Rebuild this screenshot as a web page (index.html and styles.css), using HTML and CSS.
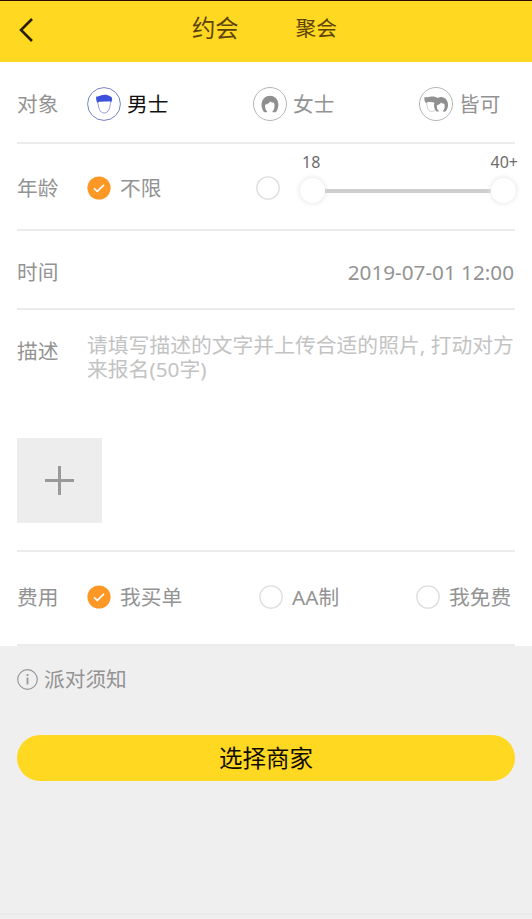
FILE: index.html
```html
<!DOCTYPE html>
<html lang="zh-CN">
<head>
<meta charset="utf-8">
<title>约会</title>
<link rel="stylesheet" href="styles.css">
</head>
<body>
<header class="header">
  <svg class="back" width="16" height="26" viewBox="0 0 16 26"><path d="M14 2 3 13l11 11" fill="none" stroke="#2a2005" stroke-width="2.600"/></svg>
  <span class="tab tab-active">约会</span>
  <span class="tab">聚会</span>
</header>
<main class="form">
  <section class="row row-target">
    <span class="label">对象</span>
    <div class="person selected">
      <svg width="34" height="34" viewBox="0 0 34 34"><circle cx="17" cy="17" r="16.400" fill="#fff" stroke="#7a80c4"/><path d="M11 14c0 7 2 12 6.200 12s6.300-5 6.300-12" fill="#fff" stroke="#939be0" stroke-width="1"/><path d="M9.200 9.500c1.500.3 3.500-.5 5-1.200 3-1 7-.8 8.700 1 2 .4 2.400 2 2.200 3.500l-.9 2.700-1-1.300c-4 .6-8 .2-11.700.5l-1 1.300c-1-1.200-1.700-4.600-1.300-6.500z" fill="#3d50dc"/></svg>
      <span>男士</span>
    </div>
    <div class="person female">
      <svg width="34" height="34" viewBox="0 0 34 34"><circle cx="17" cy="17" r="16.500" fill="#fff" stroke="#b5b5b5"/><path d="M11.200 25C6.500 20 8 9 17 8.800c9 .2 10.500 11.200 5.900 16.200-1.300.4-2.600.3-3.700-.1 2.300-2 3-5.600 1.800-9.100-1.400.1-2.700-.3-3.700-1.200-1 1.600-2.800 2.700-5.200 3.100-.4 3 .5 5.400 2.400 7.200-1 .4-2.200.4-3.300.1z" fill="#8f8f8f"/></svg>
      <span>女士</span>
    </div>
    <div class="person both">
      <svg width="34" height="34" viewBox="0 0 34 34"><circle cx="17" cy="17" r="16.500" fill="#fff" stroke="#b5b5b5"/><path d="M7.700 14c0 6 1.300 10.500 4.800 10.500s4.500-3 4.500-7" fill="#fff" stroke="#ccc"/><path d="M5.300 10.300c3 .3 5-.7 7-.8 2.800-.1 5.500.6 6.700 1.800l-3 4.500c-3-.9-5.200-.7-8-.6l-.8 1c-1.300-1-2.200-3.500-1.900-5.900z" fill="#929292"/><path d="M17.200 24.300c-4-4.300-2.400-14 4.900-14.200 7.500.2 8.700 9.900 4.700 14.200-1.100.5-2.200.4-3.200 0 2.100-1.800 2.600-4.600 1.700-7.500-1.300.1-2.300-.3-3.200-1.200-.9 1.500-2.300 2.300-4.200 2.600-.3 2.500.4 4.600 2.100 6.100-.9.300-1.900.3-2.800 0z" fill="#8f8f8f"/></svg>
      <span>皆可</span>
    </div>
  </section>
  <section class="row row-age">
    <span class="label">年龄</span>
    <div class="option">
      <svg class="radio" viewBox="0 0 24 24"><circle cx="12" cy="12" r="11.600" fill="#fd9827"/><path d="m7 12.300 3.300 3 6.700-6.500" fill="none" stroke="#fff" stroke-width="1.700"/></svg>
      <span>不限</span>
    </div>
    <svg class="radio age-radio" viewBox="0 0 24 24"><circle cx="12" cy="12" r="11.200" fill="#fff" stroke="#dedede" stroke-width="1.300"/></svg>
    <div class="range">
      <div class="range-labels"><span>18</span><span>40+</span></div>
      <div class="slider"><i class="knob"></i><i class="track"></i><i class="knob"></i></div>
    </div>
  </section>
  <section class="row row-time">
    <span class="label">时间</span>
    <span class="date">2019-07-01 12:00</span>
  </section>
  <section class="row row-desc">
    <div class="desc">
      <span class="label">描述</span>
      <p class="placeholder">请填写描述的文字并上传合适的照片, 打动对方<br>来报名(50字)</p>
    </div>
    <div class="upload">
      <svg width="29" height="29" viewBox="0 0 29 29"><path d="M14.500 0v29M0 14.500h29" stroke="#999" stroke-width="3"/></svg>
    </div>
  </section>
  <section class="row row-cost">
    <span class="label">费用</span>
    <div class="option">
      <svg class="radio" viewBox="0 0 24 24"><circle cx="12" cy="12" r="11.600" fill="#fd9827"/><path d="m7 12.300 3.300 3 6.700-6.500" fill="none" stroke="#fff" stroke-width="1.700"/></svg>
      <span>我买单</span>
    </div>
    <div class="option split">
      <svg class="radio" viewBox="0 0 24 24"><circle cx="12" cy="12" r="11.200" fill="#fff" stroke="#dedede" stroke-width="1.300"/></svg>
      <span>AA制</span>
    </div>
    <div class="option free">
      <svg class="radio" viewBox="0 0 24 24"><circle cx="12" cy="12" r="11.200" fill="#fff" stroke="#dedede" stroke-width="1.300"/></svg>
      <span>我免费</span>
    </div>
  </section>
</main>
<div class="notice">
  <svg width="21" height="21" viewBox="0 0 21 21"><circle cx="10.500" cy="10.500" r="9.800" fill="none" stroke="#999" stroke-width="1.200"/><path d="M10.500 8.500v7M10.500 5v2" stroke="#999" stroke-width="1.800"/></svg>
  <span>派对须知</span>
</div>
<button class="submit">选择商家</button>
<div class="bottom-line"></div>
</body>
</html>
```
FILE: styles.css
```css
* { box-sizing: border-box; }
body {
  margin: 0;
  height: 919px;
  display: flex;
  flex-direction: column;
  background: #efefef;
  color: #939393;
  font: 20.7px/24px "Noto Sans", "Noto Sans CJK SC", sans-serif;
  overflow: hidden;
}
svg { display: block; flex: none; }
span { white-space: nowrap; }
.header {
  height: 62px;
  flex: none;
  display: flex;
  align-items: center;
  padding: 0 0 7px 18px;
  background: #ffd821;
  border-top: 1px solid #2b0d05;
  color: #5c430b;
}
.back { margin-top: 4px; }
.tab { margin-left: 57px; }
.tab-active { margin-left: 158px; font-size: 23.3px; }
.form { flex: none; background: #fff; padding: 0 17px; }
.row { display: flex; align-items: center; border-bottom: 2px solid #ebebeb; }
.label { width: 70px; flex: none; }
.row-target { height: 82px; padding-top: 4px; }
.person { display: flex; align-items: center; gap: 6px; width: 166px; flex: none; }
.both { width: auto; }
.selected { color: #111; }
.row-age { height: 87px; padding-top: 2px; }
.option { display: flex; align-items: center; gap: 9px; }
.radio { width: 24px; height: 24px; }
.row-age .option { width: 169px; flex: none; }
.range { width: 216px; margin: -20px -3px 0 20px; flex: none; }
.range-labels { display: flex; justify-content: space-between; margin-right: -2px; padding-left: 2px; font-size: 16px; line-height: 20px; color: #6d6d6d; }
.slider { display: flex; align-items: center; margin-top: 6px; }
.knob { width: 25px; height: 25px; border-radius: 50%; background: #fff; box-shadow: 0 0 4px 1px #e8e8e8; flex: none; }
.track { flex: 1; height: 4px; background: #cecece; }
.row-time { height: 79px; justify-content: space-between; padding-top: 5px; }
.date { margin-right: 1px; }
.row-desc { height: 242px; display: block; padding-top: 23px; }
.desc { display: flex; height: 105px; }
.desc .label { padding-top: 6px; }
.placeholder { margin: 0; color: #c3c3c3; white-space: nowrap; font-size: 20.8px; }
.upload { width: 85px; height: 85px; background: #ededed; display: flex; align-items: center; justify-content: center; }
.row-cost { height: 94px; padding-bottom: 3px; }
.row-cost .option { width: 172px; flex: none; }
.row-cost .split { width: 157px; }
.row-cost .free { width: 98px; }
.notice { display: flex; align-items: center; gap: 6px; height: 66px; padding-left: 17px; flex: none; }
.submit {
  height: 46px;
  margin: 23px 17px 0;
  padding: 0;
  border: 0;
  border-radius: 23px;
  background: #ffd821;
  color: #100c00;
  font: 400 23.5px/46px "Noto Sans", "Noto Sans CJK SC", sans-serif;
  flex: none;
}
.bottom-line { height: 2px; margin-top: 132px; background: #eaeaea; flex: none; }
```
